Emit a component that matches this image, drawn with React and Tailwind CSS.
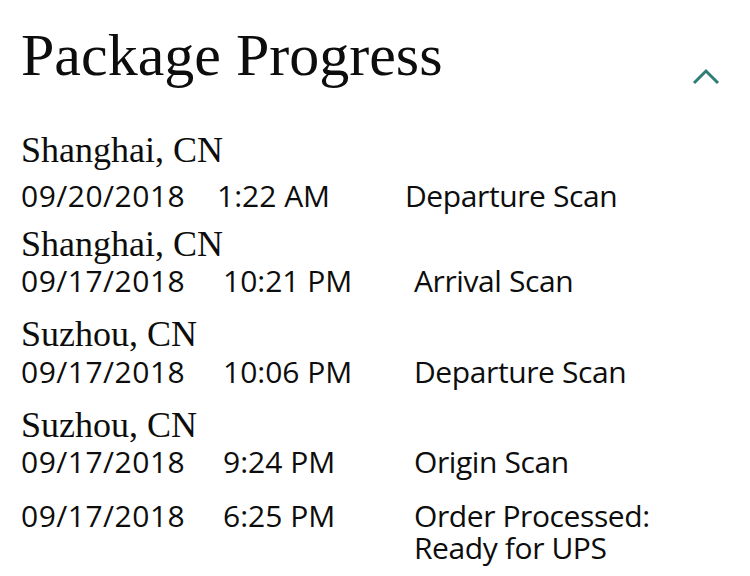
const events = [
  { city: 'Shanghai, CN', date: '09/20/2018', time: '1:22 AM', desc: ['Departure Scan'], gap: '', cityGap: 'mt-[10px]', dateW: 'w-[196px]', timeW: 'w-[188px]' },
  { city: 'Shanghai, CN', date: '09/17/2018', time: '10:21 PM', desc: ['Arrival Scan'], gap: 'mt-[12px]', cityGap: 'mt-px', dateW: 'w-[202px]', timeW: 'w-[191px]' },
  { city: 'Suzhou, CN', date: '09/17/2018', time: '10:06 PM', desc: ['Departure Scan'], gap: 'mt-[17px]', cityGap: 'mt-[2px]', dateW: 'w-[202px]', timeW: 'w-[191px]' },
  { city: 'Suzhou, CN', date: '09/17/2018', time: '9:24 PM', desc: ['Origin Scan'], gap: 'mt-[17px]', cityGap: 'mt-px', dateW: 'w-[202px]', timeW: 'w-[191px]' },
  { city: null, date: '09/17/2018', time: '6:25 PM', desc: ['Order Processed:', 'Ready for UPS'], gap: 'mt-[20px]', cityGap: '', dateW: 'w-[202px]', timeW: 'w-[191px]' },
]

function ChevronUp() {
  return (
    <svg width="28" height="17" viewBox="0 0 28 17" fill="none">
      <polyline points="2,15 14,3 26,15" stroke="#2f7d76" strokeWidth="3" />
    </svg>
  )
}

export default function App() {
  return (
    <div className="w-[750px] h-[576px] bg-white text-[#0d0d0d] overflow-hidden pl-[21px]">
      <div className="flex justify-between items-start pt-[26px] pr-[30px]">
        <h1 className="text-[60px] leading-[59px] font-['Liberation_Serif',serif]">Package Progress</h1>
        <div className="mt-[42px]">
          <ChevronUp />
        </div>
      </div>

      <div className="mt-[47px]">
        {events.map((ev, i) => (
          <div key={i} className={ev.gap}>
            {ev.city && (
              <div className="text-[36px] leading-[36px] font-['Liberation_Serif',serif]">{ev.city}</div>
            )}
            <div
              className={`flex items-baseline text-[30px] font-['Open_Sans',sans-serif] ${
                ev.desc.length > 1 ? 'leading-[32px]' : 'leading-[36px]'
              } ${ev.cityGap}`}
            >
              <span className={`${ev.dateW} tracking-[0.5px]`}>{ev.date}</span>
              <span className={ev.timeW}>{ev.time}</span>
              <span className="tracking-[-0.4px]">
                {ev.desc.map(line => (
                  <div key={line}>{line}</div>
                ))}
              </span>
            </div>
          </div>
        ))}
      </div>
    </div>
  )
}
